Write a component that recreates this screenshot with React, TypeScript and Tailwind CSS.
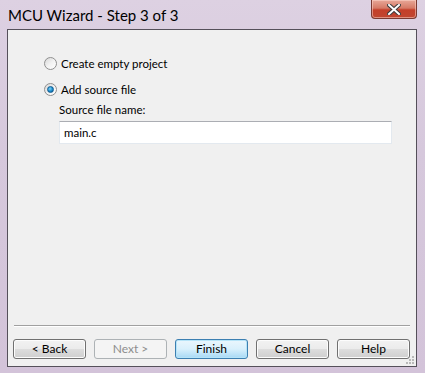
import React from "react";

const ui = { fontFamily: 'Lato, "Open Sans", sans-serif' };

const Radio = ({ checked, label }: { checked?: boolean; label: string }) => (
  <label className="flex items-center gap-[3px] h-[15px] text-[11.5px] text-black leading-none">
    <span className="w-[13px] h-[13px] rounded-full border border-[#8f8f8f] bg-gradient-to-br from-[#d6d6d6] via-[#f2f2f2] to-[#ffffff] flex items-center justify-center shrink-0">
      {checked && (
        <span className="w-[7px] h-[7px] rounded-full bg-[radial-gradient(circle_at_40%_35%,#7fd3f7_0%,#1a8ccc_55%,#0b4f86_100%)] border border-[#0f5b91]" />
      )}
    </span>
    <span className="ml-[1px]">{label}</span>
  </label>
);

const Button = ({
  children,
  variant = "normal",
}: {
  children: React.ReactNode;
  variant?: "normal" | "default" | "disabled";
}) => {
  const styles =
    variant === "default"
      ? "border-[#3c7fb1] bg-gradient-to-b from-[#eaf6fd] via-[#d9f0fc] to-[#a7d9f5] text-black shadow-[inset_0_0_0_1px_#b6e4f8]"
      : variant === "disabled"
      ? "border-[#adb2b5] bg-[#f4f4f4] text-[#8d8d8d]"
      : "border-[#707070] bg-[linear-gradient(#f2f2f2_0%,#ebebeb_50%,#dddddd_51%,#cfcfcf_100%)] text-black shadow-[inset_0_0_0_1px_#fcfcfc]";
  return (
    <button
      className={`w-[73px] h-[20px] rounded-[3px] border text-[12px] leading-none flex items-center justify-center ${styles}`}
    >
      {children}
    </button>
  );
};

export default function App() {
  return (
    <div
      className="w-[425px] h-[373px] bg-[linear-gradient(180deg,#ddd1e2_0%,#d6c8dc_40%,#d3c3d9_100%)] flex flex-col"
      style={ui}
    >
      {/* title bar */}
      <div className="h-[29px] flex items-start justify-between pl-[8px] pr-[8px]">
        <span className="mt-[6px] text-[15px] text-black leading-[18px]">
          MCU Wizard - Step 3 of 3
        </span>
        <button className="w-[46px] h-[19px] rounded-b-[4px] border border-t-0 border-[#7a3a32] bg-[linear-gradient(#e8a898_0%,#d67a66_45%,#c43f29_55%,#c04630_100%)] flex items-center justify-center shadow-[inset_0_0_0_1px_rgba(255,220,210,0.5)]">
          <svg width="14" height="11" viewBox="0 0 14 11">
            <path
              d="M2 1 L12 10 M12 1 L2 10"
              stroke="#3b3b3b"
              strokeWidth="4"
              strokeLinecap="square"
            />
            <path
              d="M2 1 L12 10 M12 1 L2 10"
              stroke="#ffffff"
              strokeWidth="2"
              strokeLinecap="square"
            />
          </svg>
        </button>
      </div>

      {/* client area */}
      <div className="ml-[7px] mr-[8px] h-[338px] border border-[#55505a] bg-[#f0f0f0] flex flex-col relative">
        <div className="flex-1 pl-[36px] pt-[26px] flex flex-col">
          <Radio label="Create empty project" />
          <div className="mt-[11px]">
            <Radio checked label="Add source file" />
          </div>
          <div className="pl-[15px] mt-[5px] flex flex-col">
            <span className="text-[11.5px] leading-[16px] text-black">Source file name:</span>
            <div className="mt-[3px] w-[333px] h-[23px] bg-white border border-[#e3e9ef] border-t-[#abadb3] flex items-center pl-[4px] text-[11.5px] text-black">
              main.c
            </div>
          </div>
        </div>

        <div className="mx-[6px] h-[2px] border-t border-[#a0a0a0] border-b-white border-b" />

        <div className="h-[39px] pl-[5px] pr-[6px] pt-[12px] flex gap-[8px]">
          <Button>&lt; Back</Button>
          <Button variant="disabled">Next &gt;</Button>
          <Button variant="default">Finish</Button>
          <Button>Cancel</Button>
          <Button>Help</Button>
        </div>

        {/* resize grip */}
        <svg className="absolute right-[1px] bottom-[1px]" width="10" height="10" viewBox="0 0 10 10">
          {[
            [7, 1],
            [4, 4],
            [7, 4],
            [1, 7],
            [4, 7],
            [7, 7],
          ].map(([x, y], i) => (
            <rect key={i} x={x} y={y} width="2" height="2" fill="#b9b9b9" />
          ))}
        </svg>
      </div>
    </div>
  );
}
